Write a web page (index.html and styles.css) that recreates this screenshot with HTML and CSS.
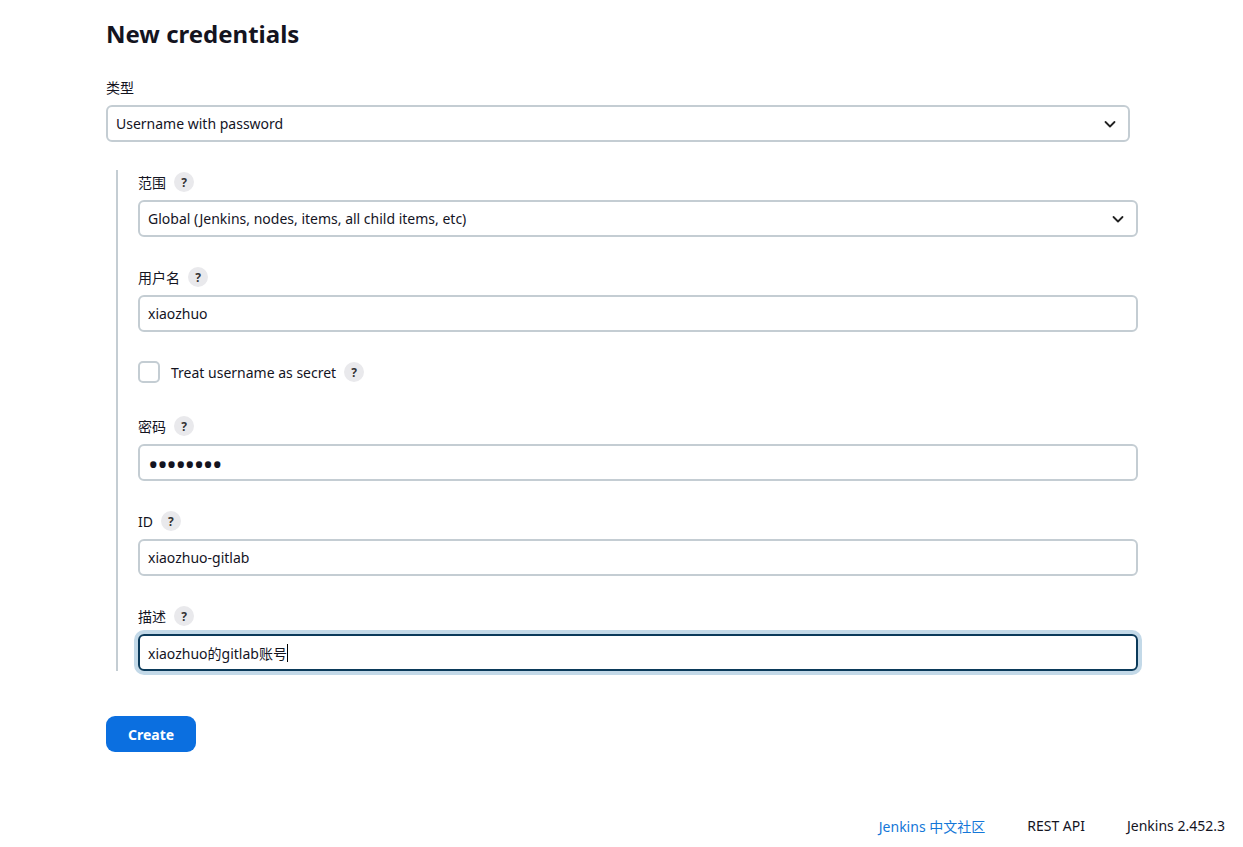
FILE: index.html
```html
<!DOCTYPE html>
<html>
<head>
  <title>New credentials</title>
  <link rel="stylesheet" href="styles.css">
</head>
<body>
  <main class="page">
    <h1 class="title">New credentials</h1>

    <div class="field top">
      <label class="label">类型</label>
      <div class="select">
        <span>Username with password</span>
        <svg class="chevron" viewBox="0 0 16 16"><path d="M3.5 6l4.5 4.5L12.5 6" fill="none" stroke="currentColor" stroke-width="1.8" stroke-linecap="round" stroke-linejoin="round"/></svg>
      </div>
    </div>

    <div class="nested">
      <div class="field">
        <label class="label">范围 <span class="help">?</span></label>
        <div class="select">
          <span>Global (Jenkins, nodes, items, all child items, etc)</span>
          <svg class="chevron" viewBox="0 0 16 16"><path d="M3.5 6l4.5 4.5L12.5 6" fill="none" stroke="currentColor" stroke-width="1.8" stroke-linecap="round" stroke-linejoin="round"/></svg>
        </div>
      </div>

      <div class="field">
        <label class="label">用户名 <span class="help">?</span></label>
        <div class="input">xiaozhuo</div>
      </div>

      <div class="check-row">
        <span class="checkbox"></span>
        <span class="check-text">Treat username as secret</span>
        <span class="help">?</span>
      </div>

      <div class="field">
        <label class="label">密码 <span class="help">?</span></label>
        <div class="input dots">••••••••</div>
      </div>

      <div class="field">
        <label class="label">ID <span class="help">?</span></label>
        <div class="input">xiaozhuo-gitlab</div>
      </div>

      <div class="field last">
        <label class="label">描述 <span class="help">?</span></label>
        <div class="input focus">xiaozhuo的gitlab账号<span class="caret"></span></div>
      </div>
    </div>

    <button class="create">Create</button>
  </main>

  <footer class="footer">
    <a href="#" class="footer-link">Jenkins 中文社区</a>
    <span>REST API</span>
    <span>Jenkins 2.452.3</span>
  </footer>
</body>
</html>
```

FILE: styles.css
```css
body {
  margin: 0;
  font-family: "Noto Sans", "Noto Sans CJK SC", sans-serif;
  font-size: 14px;
  color: #14141f;
  background: #fff;
}
.page {
  width: 1024px;
  margin-left: 106px;
  padding-top: 18px;
}
.title {
  font-size: 24px;
  font-weight: 700;
  margin: 0 0 27px;
  line-height: 32px;
}
.field {
  margin-bottom: 30px;
}
.field.top,
.field.last { margin-bottom: 0; }
.label {
  display: flex;
  align-items: center;
  gap: 8px;
  height: 20px;
  margin-bottom: 8px;
}
.help {
  display: inline-flex;
  align-items: center;
  justify-content: center;
  width: 20px;
  height: 20px;
  border-radius: 50%;
  background: #e9e9ec;
  font-size: 12px;
  font-weight: 700;
  color: #333;
}
.select, .input {
  box-sizing: border-box;
  height: 37px;
  border: 2px solid #c4cdd3;
  border-radius: 6px;
  display: flex;
  align-items: center;
  padding: 0 8px;
  justify-content: space-between;
}
.chevron {
  width: 16px;
  height: 16px;
  color: #222;
  margin-right: 2px;
}
.nested {
  margin: 28px -8px 0 10px;
  border-left: 2px solid #c4cdd3;
  padding-left: 20px;
  padding-top: 2px;
}
.check-row {
  display: flex;
  align-items: center;
  height: 22px;
  margin: -1px 0 33px;
}
.checkbox {
  box-sizing: border-box;
  width: 22px;
  height: 22px;
  border: 2px solid #c4cdd3;
  border-radius: 5px;
  margin-right: 11px;
}
.check-text { margin-right: 8px; }
.input { justify-content: flex-start; }
.dots {
  font-size: 28px;
  line-height: 1;
  letter-spacing: -1.4px;
  padding-top: 2px;
}
.input.focus {
  border-color: #0b3a5a;
  box-shadow: 0 0 0 4px #c3d9e8;
}
.caret {
  display: inline-block;
  width: 1px;
  height: 18px;
  background: #000;
}
.create {
  margin-top: 45px;
  width: 90px;
  height: 36px;
  border: none;
  border-radius: 9px;
  background: #0b6fe0;
  color: #fff;
  font-family: inherit;
  font-size: 14px;
  font-weight: 700;
}
.footer {
  display: flex;
  justify-content: flex-end;
  gap: 42px;
  padding-right: 18px;
  margin-top: 64px;
  font-size: 14px;
}
.footer-link {
  color: #1477d8;
  text-decoration: none;
}
```
